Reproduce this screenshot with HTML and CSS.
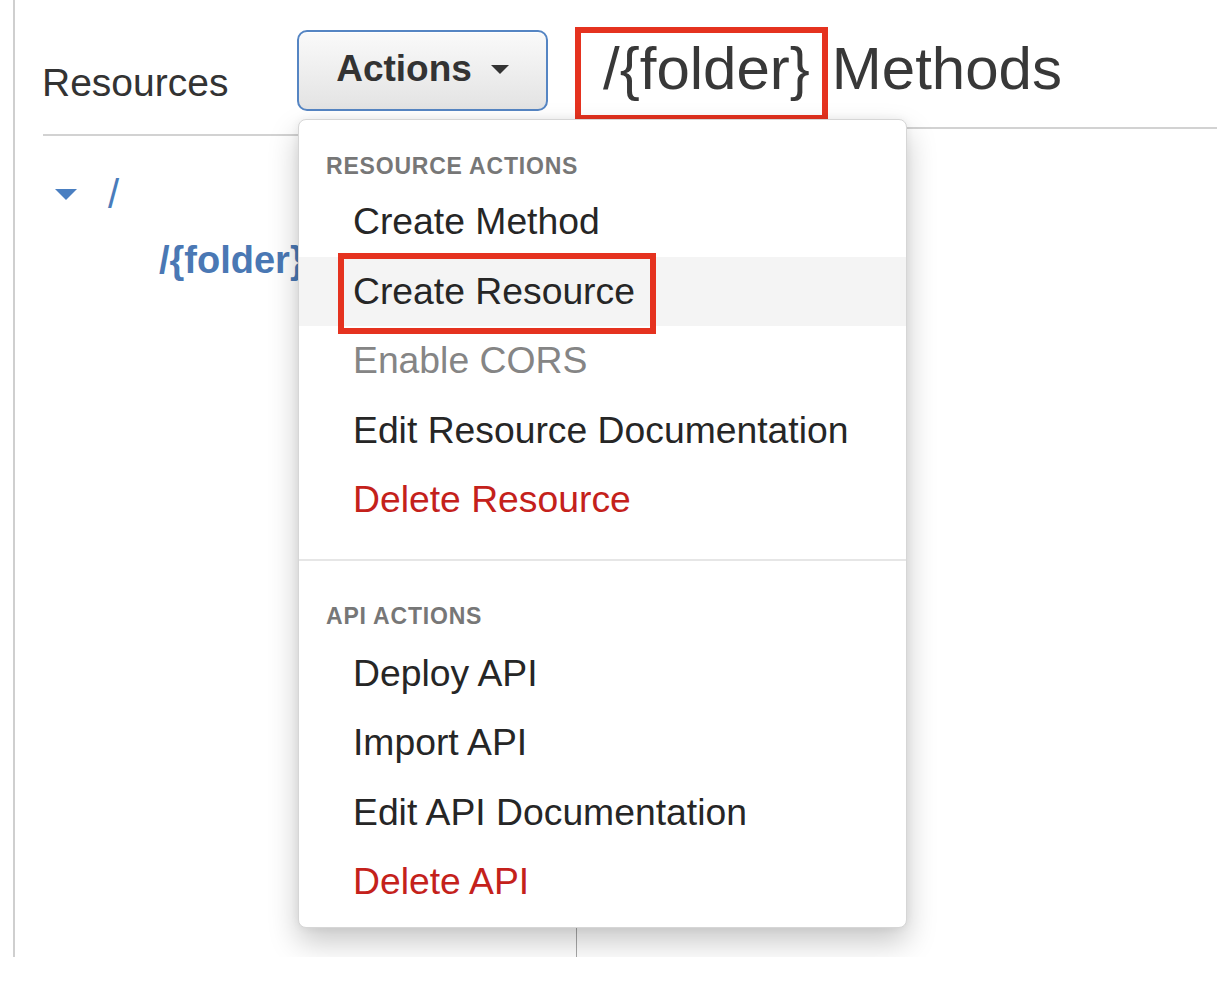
FILE: index.html
```html
<!DOCTYPE html>
<html lang="en">
<head>
<meta charset="utf-8">
<title>/{folder} Methods</title>
<link rel="stylesheet" href="styles.css">
</head>
<body>
<div class="app">
  <section class="left">
    <div class="left-head">
      <h2 class="title">Resources</h2>
      <button class="actions-btn" type="button">
        <span>Actions</span>
        <svg class="btn-caret" width="18" height="9" viewBox="0 0 18 9"><path d="M0 0H18L9 9Z" fill="#333"/></svg>
      </button>
    </div>
    <div class="tree">
      <div class="tree-row">
        <svg class="tree-caret" width="22" height="11" viewBox="0 0 22 11"><path d="M0 0H22L11 11Z" fill="#4a7fc1"/></svg>
        <span class="root-slash">/</span>
      </div>
      <div class="tree-child">/{folder}</div>
    </div>
  </section>
  <section class="right">
    <div class="right-head">
      <h1 class="heading"><span class="annot-box">/{folder}</span><span class="heading-rest">Methods</span></h1>
    </div>
  </section>

  <div class="menu">
    <div class="menu-section">
      <div class="menu-header">RESOURCE ACTIONS</div>
      <div class="menu-item">Create Method</div>
      <div class="menu-item hover annotated">Create Resource</div>
      <div class="menu-item disabled">Enable CORS</div>
      <div class="menu-item">Edit Resource Documentation</div>
      <div class="menu-item danger">Delete Resource</div>
    </div>
    <div class="menu-section second">
      <div class="menu-header">API ACTIONS</div>
      <div class="menu-item">Deploy API</div>
      <div class="menu-item">Import API</div>
      <div class="menu-item">Edit API Documentation</div>
      <div class="menu-item danger">Delete API</div>
    </div>
  </div>
</div>
</body>
</html>
```

FILE: styles.css
```css
*, *::before, *::after {
  box-sizing: border-box;
}

html, body {
  margin: 0;
  padding: 0;
  background: #ffffff;
}

body {
  font-family: "Liberation Sans", Arial, Helvetica, sans-serif;
  color: #333333;
}

.app {
  position: relative;
  display: flex;
  margin-left: 13px;
  height: 957px;
  border-left: 2px solid #cfcfcf;
  overflow: hidden;
}

/* Left panel */
.left {
  display: flex;
  flex-direction: column;
  width: 562px;
  flex: none;
}

.left-head {
  display: flex;
  justify-content: space-between;
  align-items: flex-start;
  margin-left: 28px;
  padding-top: 30px;
  padding-right: 29px;
  height: 136px;
  flex: none;
  border-bottom: 2px solid #d2d2d2;
}

.title {
  margin: 31px 0 0 -1px;
  font-size: 39px;
  font-weight: normal;
  line-height: 44px;
  color: #333333;
}

.actions-btn {
  display: flex;
  align-items: center;
  justify-content: center;
  gap: 19px;
  width: 251px;
  height: 81px;
  padding: 0 0 4px 0;
  border: 2px solid #5585c3;
  border-radius: 10px;
  background: linear-gradient(#fafafa, #e3e3e3);
  box-shadow: inset 0 1px 0 #ffffff;
  font-family: inherit;
  font-size: 37px;
  font-weight: bold;
  color: #333333;
}

.btn-caret {
  display: block;
  margin-top: 2px;
}

.tree {
  flex: 1;
  padding: 38px 0 0 40px;
  border-right: 1px solid #a8a8a8;
}

.tree-row {
  display: flex;
  align-items: center;
  gap: 31px;
  height: 40px;
}

.tree-caret {
  display: block;
}

.root-slash {
  font-size: 40px;
  line-height: 40px;
  color: #4a7cbb;
}

.tree-child {
  margin-top: 25px;
  padding-left: 104px;
  font-size: 38px;
  font-weight: bold;
  line-height: 42px;
  color: #4a78b4;
  white-space: nowrap;
}

/* Right panel */
.right {
  flex: 1;
  min-width: 0;
}

.right-head {
  height: 129px;
  padding-top: 27px;
  border-bottom: 2px solid #d2d2d2;
}

.heading {
  display: flex;
  align-items: baseline;
  margin: 0 0 0 -2px;
  font-size: 60px;
  font-weight: normal;
  line-height: 72px;
  color: #383838;
}

.annot-box {
  border: 6px solid #e5321f;
  padding: 0 12px 10px 22px;
}

.heading-rest {
  margin-left: 4px;
}

/* Dropdown menu */
.menu {
  position: absolute;
  left: 283px;
  top: 119px;
  width: 609px;
  height: 809px;
  padding-top: 29px;
  background: #ffffff;
  border: 1px solid #d6d6d6;
  border-radius: 8px;
  box-shadow: 0 14px 30px rgba(0, 0, 0, 0.22), 0 0 8px rgba(0, 0, 0, 0.06);
  z-index: 5;
}

.menu-section {
  padding-bottom: 24px;
}

.menu-section.second {
  padding-top: 38px;
  padding-bottom: 0;
  border-top: 2px solid #e6e6e6;
}

.menu-header {
  height: 38px;
  padding-left: 27px;
  font-size: 23px;
  font-weight: bold;
  line-height: 34px;
  letter-spacing: 0.8px;
  color: #777777;
}

.menu-section.second .menu-header {
  height: 40px;
}

.menu-item {
  position: relative;
  height: 69.5px;
  padding-left: 54px;
  font-size: 37.3px;
  line-height: 69.5px;
  color: #262626;
  white-space: nowrap;
}

.menu-item.hover {
  background: #f4f4f4;
}

.menu-item.disabled {
  color: #858585;
}

.menu-item.danger {
  color: #c4211b;
}

.menu-item.annotated::after {
  content: "";
  position: absolute;
  left: 39px;
  top: -4px;
  width: 318px;
  height: 81px;
  border: 6px solid #e5321f;
}
```
